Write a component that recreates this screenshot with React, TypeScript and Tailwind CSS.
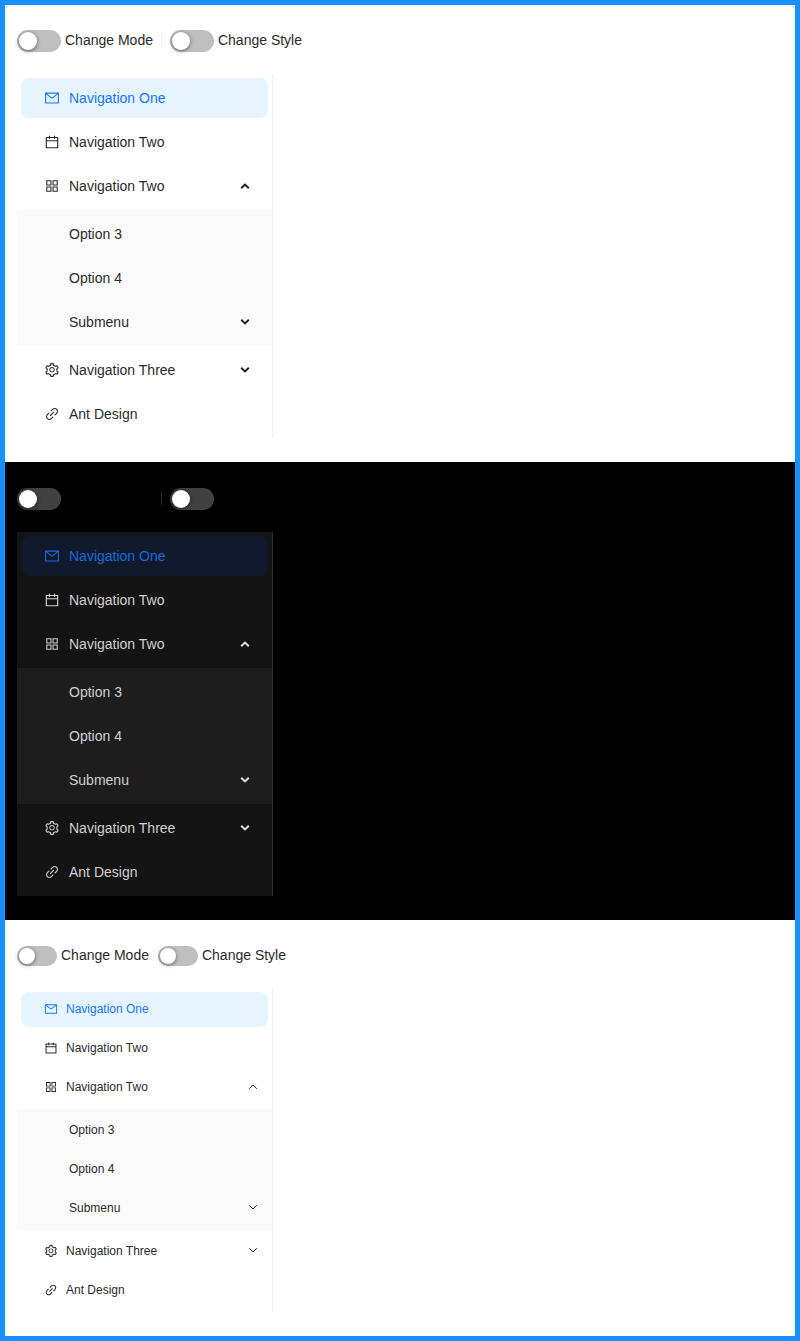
import { AiOutlineMail, AiOutlineCalendar, AiOutlineAppstore, AiOutlineSetting, AiOutlineLink } from "react-icons/ai";
import type { ReactNode } from "react";

type Theme = "light" | "dark" | "small";

function Chevron({ up, small }: { up?: boolean; small?: boolean }) {
  const d = small
    ? up
      ? "M1.2 6.7 L5 3 L8.8 6.7"
      : "M1.2 3.3 L5 7 L8.8 3.3"
    : up
      ? "M1.2 7.2 L5 3.6 L8.8 7.2"
      : "M1.2 2.8 L5 6.4 L8.8 2.8";
  return (
    <svg width="10" height="10" viewBox="0 0 10 10" fill="none" className={small && !up ? "-translate-y-px" : ""}>
      <path d={d} stroke="currentColor" strokeWidth={small ? 1 : 2} />
    </svg>
  );
}

function Item({ theme, icon, label, active, chevron, sub }: { theme: Theme; icon?: ReactNode; label: string; active?: boolean; chevron?: "up" | "down"; sub?: boolean }) {
  const dark = theme === "dark";
  const small = theme === "small";
  const base = small ? "h-[35px] pb-0.5 text-xs" : "h-10 text-sm";
  const colors = active
    ? dark
      ? "bg-[#111a2c] text-[#1668dc]"
      : "bg-[#e6f4ff] text-[#1677ff]"
    : dark
      ? "text-[#d0d0d0]"
      : "text-[#2a2a2a]";
  return (
    <li className={`mx-1 flex items-center rounded-lg pl-6 ${small ? "pr-[10px]" : "pr-[18px]"} ${base} ${colors}`}>
      {icon ? (
        <span className={`flex shrink-0 justify-center [&>svg]:shrink-0 ${small ? "mr-[9px] w-3 text-[14px]" : "mr-[10px] w-[14px] text-[16px]"}`}>{icon}</span>
      ) : null}
      {sub ? <span className="w-6 shrink-0" /> : null}
      <span className="flex-1">{label}</span>
      {chevron ? (
        <span className={dark ? "text-[#e0e0e0]" : "text-[#1f1f1f]"}>
          <Chevron up={chevron === "up"} small={small} />
        </span>
      ) : null}
    </li>
  );
}

function Switch({ theme }: { theme: Theme }) {
  const small = theme === "small";
  const dark = theme === "dark";
  return (
    <span className={`relative inline-block shrink-0 rounded-full ${small ? "h-5 w-10" : "h-[22px] w-11"} ${dark ? "bg-[#414141]" : "bg-[#bfbfbf]"}`}>
      <span className={`absolute left-0.5 top-0.5 rounded-full bg-white shadow-[0_1px_4px_rgba(0,0,0,0.5)] ${small ? "size-4" : "size-[18px]"}`} />
    </span>
  );
}

function Section({ theme }: { theme: Theme }) {
  const dark = theme === "dark";
  const small = theme === "small";
  return (
    <section className={`px-3 pb-6 ${theme === "light" ? "pt-[25px]" : "pt-[26px]"} ${dark ? "bg-black" : "bg-white"}`}>
      <div className={`mb-[22px] flex items-center text-sm ${small ? "h-5" : "h-[22px]"} ${dark ? "text-transparent" : "text-[#2a2a2a]"}`}>
        <Switch theme={theme} />
        <span className="ml-1 pb-0.5">Change Mode</span>
        <span className={`mb-0.5 h-[14px] w-px ${small ? "mx-[4px]" : "mx-2"} ${dark ? "bg-[#2a2a2a]" : "bg-[#f0f0f0]"}`} />
        <Switch theme={theme} />
        <span className="ml-1 pb-0.5">Change Style</span>
      </div>
      <ul className={`flex w-64 flex-col gap-1 border-r py-1 ${dark ? "border-[#303030] bg-[#141414]" : "border-[#f0f0f0] bg-white"}`}>
        <Item theme={theme} icon={<AiOutlineMail />} label="Navigation One" active />
        <Item theme={theme} icon={<AiOutlineCalendar />} label="Navigation Two" />
        <Item theme={theme} icon={<AiOutlineAppstore />} label="Navigation Two" chevron="up" />
        <li>
          <ul className={`flex flex-col gap-1 py-1 ${dark ? "bg-[#1d1d1d]" : "bg-[#fafafa]"}`}>
            <Item theme={theme} label="Option 3" sub />
            <Item theme={theme} label="Option 4" sub />
            <Item theme={theme} label="Submenu" sub chevron="down" />
          </ul>
        </li>
        <Item theme={theme} icon={<AiOutlineSetting />} label="Navigation Three" chevron="down" />
        <Item theme={theme} icon={<AiOutlineLink />} label="Ant Design" />
      </ul>
    </section>
  );
}

export default function App() {
  return (
    <div className="border-[5px] border-[#1890ff] font-['Liberation_Sans',Arial,sans-serif]">
      <Section theme="light" />
      <Section theme="dark" />
      <Section theme="small" />
    </div>
  );
}
